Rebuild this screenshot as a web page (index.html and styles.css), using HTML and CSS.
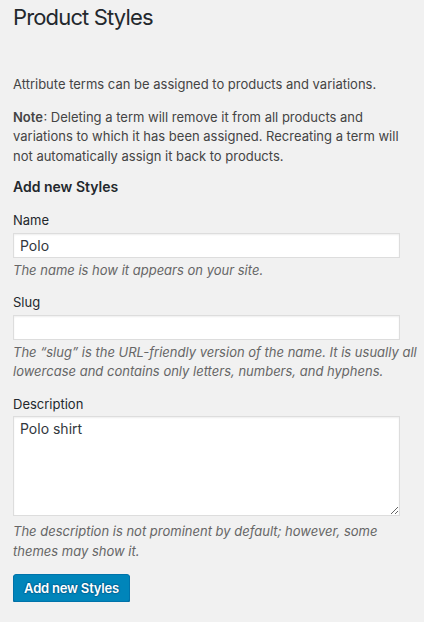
FILE: index.html
```html
<!DOCTYPE html>
<html lang="en">
<head>
<meta charset="utf-8">
<title>Product Styles</title>
<link rel="stylesheet" href="styles.css">
</head>
<body>
<div class="wrap">
  <h1 class="page-title">Product Styles</h1>
  <p class="intro">Attribute terms can be assigned to products and variations.</p>
  <p class="note"><strong>Note</strong>: Deleting a term will remove it from all products and variations to which it has been assigned. Recreating a term will not automatically assign it back to products.</p>
  <form class="term-form">
    <h3 class="form-title">Add new Styles</h3>
    <div class="field">
      <label class="field-label" for="tag-name">Name</label>
      <input class="text-input" id="tag-name" type="text" value="Polo">
      <p class="description">The name is how it appears on your site.</p>
    </div>
    <div class="field">
      <label class="field-label" for="tag-slug">Slug</label>
      <input class="text-input" id="tag-slug" type="text" value="">
      <p class="description">The “slug” is the URL-friendly version of the name. It is usually all lowercase and contains only letters, numbers, and hyphens.</p>
    </div>
    <div class="field">
      <label class="field-label" for="tag-description">Description</label>
      <textarea class="text-area" id="tag-description">Polo shirt</textarea>
      <p class="description">The description is not prominent by default; however, some themes may show it.</p>
    </div>
    <button class="button-primary" type="button">Add new Styles</button>
  </form>
</div>
</body>
</html>
```
FILE: styles.css
```css
html, body {
  margin: 0;
  padding: 0;
  background: #f1f1f1;
}
body {
  font-family: Inter, "Noto Sans", sans-serif;
  font-size: 13px;
  line-height: 1.5;
  color: #444;
}
.wrap {
  padding: 3px 6px 0 13px;
}
.page-title {
  margin: 0;
  font-size: 22px;
  font-weight: 400;
  letter-spacing: -0.85px;
  line-height: 29px;
  color: #23282d;
}
.intro {
  margin: 43px 0 13px;
}
.note {
  margin: 0;
}
.note strong {
  font-weight: 600;
  margin-right: 0.5px;
}
.term-form {
  margin: 0;
}
.form-title {
  margin: 11px 0 14px;
  font-size: 14px;
  font-weight: 600;
  line-height: 20px;
  color: #23282d;
}
.field {
  margin: 0 0 13px;
}
.field-label {
  display: block;
  color: #23282d;
}
.text-input {
  display: block;
  box-sizing: border-box;
  width: 387px;
  height: 25px;
  margin: 2px 0 0;
  padding: 2px 6px;
  border: 1px solid #ddd;
  box-shadow: inset 0 1px 2px rgba(0,0,0,.07);
  background: #fff;
  font-family: inherit;
  font-size: 14px;
  color: #32373c;
  outline: none;
}
.text-area {
  display: block;
  box-sizing: border-box;
  width: 387px;
  height: 100px;
  margin: 2px 0 6px;
  padding: 2px 6px;
  border: 1px solid #ddd;
  box-shadow: inset 0 1px 2px rgba(0,0,0,.07);
  background: #fff;
  font-family: inherit;
  font-size: 14px;
  line-height: 1.4;
  color: #32373c;
  outline: none;
}
.description {
  margin: 3px 0 0;
  font-style: italic;
  color: #666;
}
.button-primary {
  display: block;
  box-sizing: border-box;
  width: 117px;
  height: 28px;
  margin: 0;
  padding: 0 0 1px;
  background: #0085ba;
  border: 1px solid #0073aa;
  border-radius: 3px;
  box-shadow: 0 1px 0 #006799;
  font-family: inherit;
  font-size: 13px;
  font-weight: 600;
  letter-spacing: -0.2px;
  color: #fff;
  text-shadow: 0 -1px 1px #006799, 1px 0 1px #006799, 0 1px 1px #006799, -1px 0 1px #006799;
}
```
